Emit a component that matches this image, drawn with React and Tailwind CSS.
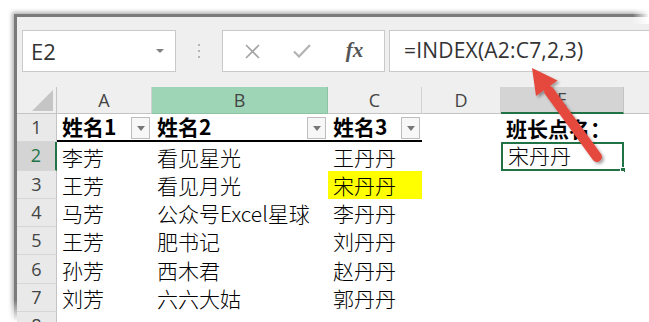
import React from 'react';

const cjk = { fontFamily: '"Noto Sans CJK SC", "Noto Sans", sans-serif' };
const ui = { fontFamily: '"Open Sans", "Noto Sans", sans-serif' };

const rows = [
  ['姓名1', '姓名2', '姓名3', '', '班长点名：'],
  ['李芳', '看见星光', '王丹丹', '', '宋丹丹'],
  ['王芳', '看见月光', '宋丹丹', '', ''],
  ['马芳', '公众号Excel星球', '李丹丹', '', ''],
  ['王芳', '肥书记', '刘丹丹', '', ''],
  ['孙芳', '西木君', '赵丹丹', '', ''],
  ['刘芳', '六六大姑', '郭丹丹', '', ''],
  ['', '', '', '', ''],
];

const FilterBtn = () => (
  <div className="absolute right-[2px] top-[3px] w-[19px] h-[22px] border border-[#bdbdbd] bg-[#f7f7f7] flex items-center justify-center">
    <svg width="8" height="5" viewBox="0 0 8 5"><path d="M0 0h8L4 5z" fill="#777" /></svg>
  </div>
);

const Arrow = () => (
  <svg className="absolute left-0 top-0 pointer-events-none" width="649" height="322" viewBox="0 0 649 322">
    <defs>
      <filter id="sh" x="-20%" y="-20%" width="140%" height="140%">
        <feDropShadow dx="2" dy="2" stdDeviation="1.6" floodColor="#000" floodOpacity="0.35" />
      </filter>
    </defs>
    <g filter="url(#sh)">
      <line x1="597" y1="157" x2="549" y2="91" stroke="#e5483c" strokeWidth="10" strokeLinecap="round" />
      <path d="M532 68 L557.5 80.5 L536 96 Z" fill="#e5483c" />
    </g>
  </svg>
);

export default function App() {
  return (
    <div className="relative w-[649px] h-[322px] bg-white overflow-hidden pl-[14px] pt-[14px]">
      <div className="w-[660px] h-[330px] bg-[#efefef] border-l-[3px] border-t-[3px] border-[#7b7b7b] shadow-[-2px_-2px_4px_rgba(0,0,0,0.3)]">
        {/* formula bar */}
        <div className="flex pt-[13px] mb-[15px] h-[55px]">
          <div className="ml-[5px] w-[154px] h-[42px] bg-white border border-[#c9c9c9] flex items-center justify-between pl-[8px] pr-[11px]">
            <span className="text-[22px] text-[#333]" style={ui}>E2</span>
            <svg width="8" height="4" viewBox="0 0 8 4"><path d="M0 0h8L4 4z" fill="#808080" /></svg>
          </div>
          <div className="w-[46px] flex flex-col items-center justify-center gap-[4px]">
            <div className="w-[2px] h-[2px] bg-[#b5b5b5]" />
            <div className="w-[2px] h-[2px] bg-[#b5b5b5]" />
            <div className="w-[2px] h-[2px] bg-[#b5b5b5]" />
          </div>
          <div className="w-[163px] h-[42px] bg-white border border-[#c9c9c9] flex items-center">
            <div className="w-[56px] flex justify-center pl-[2px]">
              <svg width="15" height="15" viewBox="0 0 15 15"><path d="M1 1L14 14M14 1L1 14" stroke="#a3a3a3" strokeWidth="1.6" /></svg>
            </div>
            <div className="w-[46px] flex justify-center">
              <svg width="18" height="14" viewBox="0 0 18 14"><path d="M1 7.5L6 12.5L17 1" stroke="#b3b3b3" strokeWidth="2.2" fill="none" /></svg>
            </div>
            <div className="flex-1 flex justify-center">
              <span className="text-[21px] italic font-bold text-[#555]" style={{ fontFamily: '"Liberation Serif", serif' }}>fx</span>
            </div>
          </div>
          <div className="ml-[4px] flex-1 h-[42px] bg-white border border-[#c9c9c9] flex items-center pl-[14px]">
            <span className="text-[21px] text-[#333] tracking-[0.2px]" style={ui}>=INDEX(A2:C7,2,3)</span>
          </div>
        </div>

        {/* sheet */}
        <div className="grid grid-cols-[40px_95px_176px_94px_79px_123px_1fr] grid-rows-[27px_repeat(8,28.3px)]">
          {/* column headers */}
          <div className="relative bg-[#efefef] border-b border-r border-[#c4c4c4]">
            <svg className="absolute right-[3px] bottom-[2px]" width="21" height="21" viewBox="0 0 21 21"><path d="M21 0V21H0z" fill="#c5c5c5" /></svg>
          </div>
          {['A', 'B', 'C', 'D', 'E', ''].map((c, k) => (
            <div
              key={k}
              className={`flex items-center justify-center text-[18px] text-[#444] border-r ${
                c === 'B' ? 'bg-[#9fd5b7] border-[#8cc3a4] border-b' : c === 'E' ? 'bg-[#d4d4d4] border-[#c4c4c4] border-b-2 border-b-[#217346]' : 'bg-[#efefef] border-[#d2d2d2] border-b border-b-[#c4c4c4]'
              }`}
              style={ui}
            >
              {c}
            </div>
          ))}

          {rows.map((r, i) => (
            <React.Fragment key={i}>
              <div
                className={`flex items-center justify-center text-[18px] border-b border-[#d6d6d6] ${
                  i === 1 ? 'bg-[#d4d4d4] text-[#217346] border-r-2 border-r-[#217346]' : 'bg-[#e9e9e9] text-[#444] border-r border-r-[#c4c4c4]'
                }`}
                style={ui}
              >
                {i + 1}
              </div>
              {r.map((v, j) => (
                <div
                  key={j}
                  className={`relative flex items-end pb-[1px] pl-[5px] text-[21px] leading-[26px] whitespace-nowrap ${
                    i === 0 ? 'font-bold text-black' : 'font-light text-black'
                  } ${i === 0 && j < 3 ? 'border-b-2 border-black' : ''} ${
                    i === 2 && j === 2 ? 'bg-[#ffff00]' : 'bg-white'
                  } ${i === 1 && j === 4 ? 'border-2 border-[#217346] pl-[3px]' : ''}`}
                  style={cjk}
                >
                  {v}
                  {i === 0 && j < 3 && <FilterBtn />}
                  {i === 1 && j === 4 && (
                    <div className="absolute right-[-4px] bottom-[-4px] w-[6px] h-[6px] bg-[#217346] border border-white" />
                  )}
                </div>
              ))}
              <div className="bg-white" />
            </React.Fragment>
          ))}
        </div>
      </div>
      {/* torn-edge fades of the screenshot */}
      <div className="absolute right-0 top-0 w-[16px] h-[24px] bg-gradient-to-r from-transparent to-white" />
      <div className="absolute left-0 bottom-0 w-[17px] h-[22px] bg-gradient-to-b from-transparent to-white" />
      <Arrow />
    </div>
  );
}
